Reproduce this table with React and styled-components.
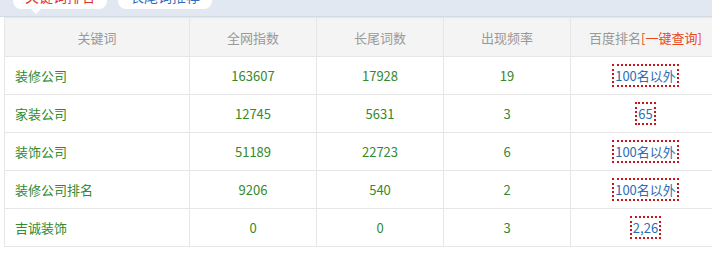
import React from "react";
import styled, { createGlobalStyle } from "styled-components";

const Global = createGlobalStyle`
  html, body { margin: 0; padding: 0; background: #fff; }
  body { font-family: "Noto Sans CJK SC", "Liberation Sans", sans-serif; }
`;

const Page = styled.div`
  width: 712px;
  height: 254px;
  overflow: hidden;
  background: #fff;
`;

const TopBar = styled.div`
  height: 17px;
  background: #e2e8f1;
  border-bottom: 1px solid #d5dbe5;
  box-sizing: border-box;
  display: flex;
  gap: 11px;
  padding-left: 13px;
  overflow: visible;
`;

const Tab = styled.div`
  position: relative;
  margin-top: -18px;
  height: 27px;
  width: 94px;
  box-sizing: border-box;
  background: #fff;
  border-radius: 8px;
  display: flex;
  align-items: center;
  justify-content: center;
  font-size: 14px;
  color: ${(p) => (p.$active ? "#e0342e" : "#2f6fbf")};
  &::after {
    content: "";
    display: ${(p) => (p.$active ? "block" : "none")};
    position: absolute;
    left: 18px;
    bottom: -5px;
    border-left: 5px solid transparent;
    border-right: 5px solid transparent;
    border-top: 5px solid #fff;
  }
`;

const Table = styled.table`
  margin-left: 4px;
  width: 716px;
  border-collapse: collapse;
  table-layout: fixed;
  font-size: 13px;
`;

const Th = styled.th`
  height: 38px;
  background: #f4f4f4;
  color: #999;
  font-weight: normal;
  border: 1px solid #e6e6e6;
  text-align: center;
  padding: 0;
`;

const Red = styled.span`
  color: #e8491d;
`;

const Td = styled.td`
  height: 37px;
  border: 1px solid #e6e6e6;
  color: #338a2e;
  text-align: ${(p) => (p.$left ? "left" : "center")};
  padding: ${(p) => (p.$left ? "0 0 0 10px" : "0")};
`;

const RankBox = styled.span`
  display: inline-block;
  border: 2px dotted #c8141c;
  color: #2b6db4;
  padding: 0 1px;
  line-height: 19px;
`;

const rows = [
  ["装修公司", "163607", "17928", "19", "100名以外"],
  ["家装公司", "12745", "5631", "3", "65"],
  ["装饰公司", "51189", "22723", "6", "100名以外"],
  ["装修公司排名", "9206", "540", "2", "100名以外"],
  ["吉诚装饰", "0", "0", "3", "2,26"],
];

export default function App() {
  return (
    <Page>
      <Global />
      <TopBar>
        <Tab $active>关键词排名</Tab>
        <Tab>长尾词推荐</Tab>
      </TopBar>
      <Table>
        <colgroup>
          <col style={{ width: 185 }} />
          <col style={{ width: 127 }} />
          <col style={{ width: 127 }} />
          <col style={{ width: 127 }} />
          <col style={{ width: 150 }} />
        </colgroup>
        <thead>
          <tr>
            <Th>关键词</Th>
            <Th>全网指数</Th>
            <Th>长尾词数</Th>
            <Th>出现频率</Th>
            <Th>
              百度排名<Red>[一键查询]</Red>
            </Th>
          </tr>
        </thead>
        <tbody>
          {rows.map((r) => (
            <tr key={r[0]}>
              <Td $left>{r[0]}</Td>
              <Td>{r[1]}</Td>
              <Td>{r[2]}</Td>
              <Td>{r[3]}</Td>
              <Td>
                <RankBox>{r[4]}</RankBox>
              </Td>
            </tr>
          ))}
        </tbody>
      </Table>
    </Page>
  );
}
